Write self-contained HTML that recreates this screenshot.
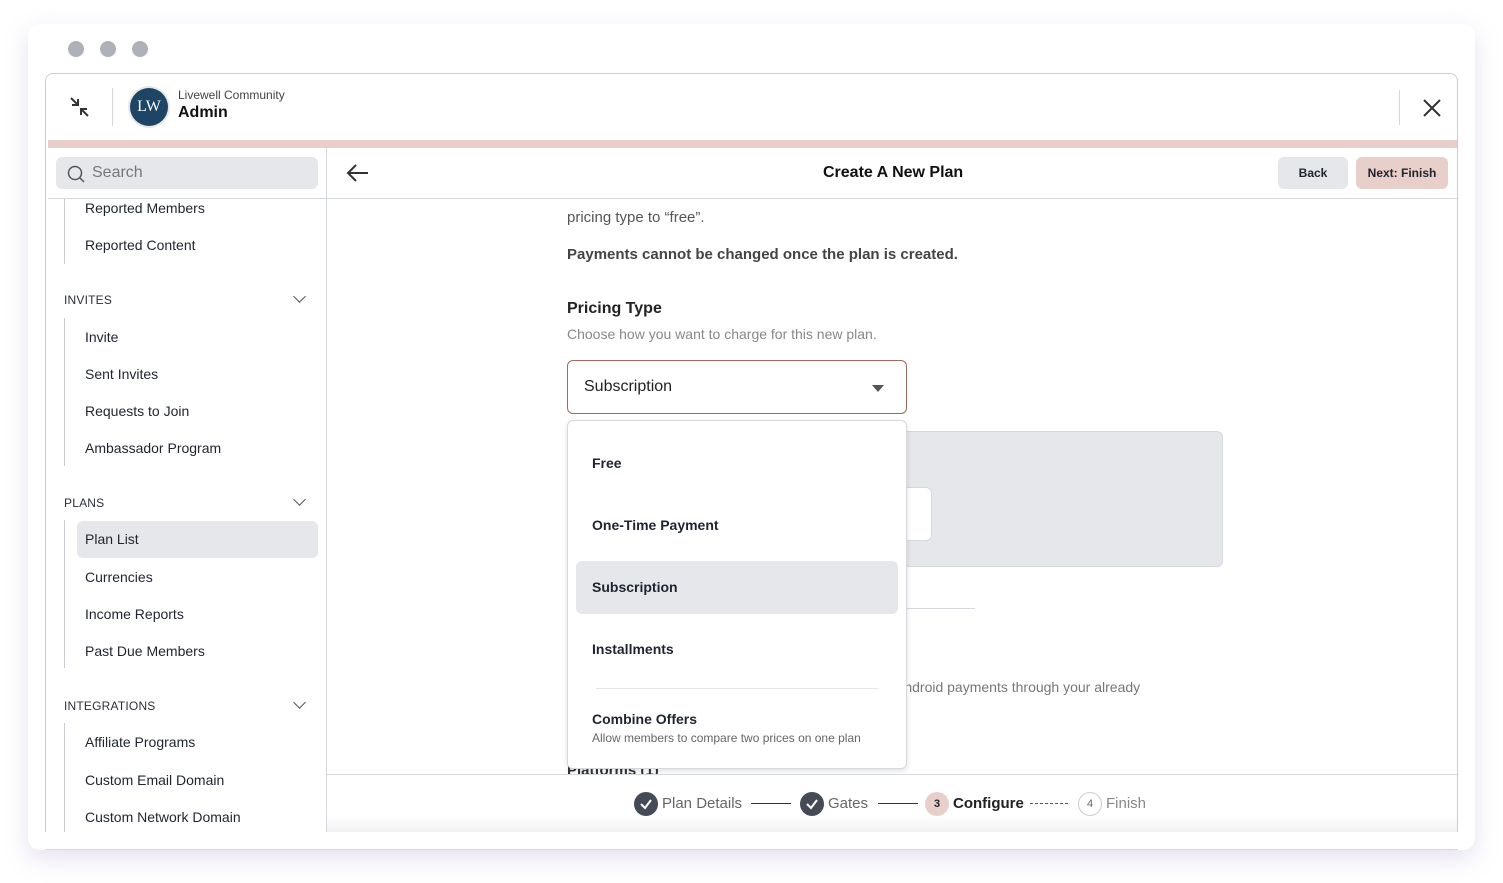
<!DOCTYPE html>
<html><head><style>
*{box-sizing:border-box;margin:0;padding:0}
body{width:1503px;height:883px;background:#fff;font-family:"Liberation Sans",sans-serif;position:relative;overflow:hidden;color:#1f2430}
.abs{position:absolute}
.win{left:28px;top:24px;width:1447px;height:826px;background:#fff;border-radius:12px;box-shadow:0 8px 24px rgba(150,130,200,.25)}
.dot{width:16px;height:16px;border-radius:50%;background:#aeb1b8;top:41px}
.frame{left:45px;top:73px;width:1413px;height:777px;border:1.5px solid #c9cdd3;border-bottom:none;border-radius:8px 8px 0 0;background:#fff;overflow:hidden}
.sb a{position:absolute;left:85px;font-size:14px;color:#1f2430}
.sec{position:absolute;left:64px;font-size:12px;color:#2b2f38;letter-spacing:.2px}
.chev{position:absolute;left:295px;width:9px;height:9px;border-right:1.5px solid #555;border-bottom:1.5px solid #555;transform:rotate(45deg)}
.vl{position:absolute;left:64px;width:1px;background:#c9cdd3}
.opt{position:absolute;left:592px;font-size:14px;font-weight:bold;color:#1f2430}
</style></head><body>
<div class="abs win"></div>
<div class="abs dot" style="left:68px"></div>
<div class="abs dot" style="left:100px"></div>
<div class="abs dot" style="left:132px"></div>
<div class="abs frame"></div>
<!-- header -->
<svg class="abs" style="left:68px;top:96px" width="24" height="22" viewBox="0 0 24 22"><path d="M3 2l7 7M4 9h6V3M20 20l-7-7M19 13h-6v6" stroke="#333" stroke-width="2" fill="none"/></svg>
<div class="abs" style="left:112px;top:88px;width:1px;height:38px;background:#d5d8dd"></div>
<div class="abs" style="left:130px;top:88px;width:38px;height:38px;border-radius:50%;background:#1d4566;color:#fff;font-size:16px;line-height:38px;text-align:center;font-family:'Liberation Serif',serif;box-shadow:0 0 0 2px #e8e8e2">LW</div>
<div class="abs" style="left:178px;top:88px;font-size:12px;color:#444">Livewell Community</div>
<div class="abs" style="left:178px;top:104px;font-size:16px;font-weight:bold;color:#111">Admin</div>
<div class="abs" style="left:1399px;top:90px;width:1px;height:35px;background:#d5d8dd"></div>
<svg class="abs" style="left:1423px;top:99px" width="18" height="18"><path d="M1 1L17 17M17 1L1 17" stroke="#333" stroke-width="2"/></svg>
<div class="abs" style="left:48px;top:140px;width:1409px;height:8px;background:#e8cfc9"></div>
<!-- sidebar -->
<div class="abs" style="left:326px;top:148px;width:1px;height:684px;background:#d5d8dd"></div>
<div class="abs" style="left:48px;top:198px;width:1409px;height:1px;background:#d5d8dd"></div>
<div class="abs" style="left:56px;top:157px;width:262px;height:32px;background:#e6e7eb;border-radius:6px"></div>
<svg class="abs" style="left:67px;top:165px" width="18" height="18"><circle cx="8" cy="8" r="6.5" stroke="#555" stroke-width="1.5" fill="none"/><path d="M13 13l4 4" stroke="#555" stroke-width="1.5"/></svg>
<div class="abs" style="left:92px;top:164px;font-size:16px;color:#777">Search</div>
<div class="sb">
<div class="vl" style="top:199px;height:65px"></div>
<a style="top:200px">Reported Members</a><a style="top:237px">Reported Content</a>
<div class="sec" style="top:293px">INVITES</div><div class="chev" style="top:292px"></div>
<div class="vl" style="top:318px;height:148px"></div>
<a style="top:329px">Invite</a><a style="top:366px">Sent Invites</a><a style="top:403px">Requests to Join</a><a style="top:440px">Ambassador Program</a>
<div class="sec" style="top:496px">PLANS</div><div class="chev" style="top:495px"></div>
<div class="vl" style="top:520px;height:148px"></div>
<div class="abs" style="left:77px;top:521px;width:241px;height:37px;background:#e6e7eb;border-radius:6px"></div>
<a style="top:531px">Plan List</a><a style="top:569px">Currencies</a><a style="top:606px">Income Reports</a><a style="top:643px">Past Due Members</a>
<div class="sec" style="top:699px">INTEGRATIONS</div><div class="chev" style="top:698px"></div>
<div class="vl" style="top:723px;height:110px"></div>
<a style="top:734px">Affiliate Programs</a><a style="top:772px">Custom Email Domain</a><a style="top:809px">Custom Network Domain</a>
</div>
<!-- top bar content -->
<svg class="abs" style="left:346px;top:163px" width="24" height="20"><path d="M22 10H3M10 2L2 10l8 8" stroke="#333" stroke-width="2" fill="none"/></svg>
<div class="abs" style="left:823px;top:164px;font-size:16px;font-weight:bold;color:#111">Create A New Plan</div>
<div class="abs" style="left:1278px;top:157px;width:70px;height:32px;background:#e6e7eb;border-radius:6px;font-size:12px;font-weight:bold;text-align:center;line-height:32px">Back</div>
<div class="abs" style="left:1356px;top:157px;width:92px;height:32px;background:#e8cfc9;border-radius:6px;font-size:12px;font-weight:bold;text-align:center;line-height:32px">Next: Finish</div>
<!-- main content -->
<div class="abs" style="left:567px;top:209px;font-size:15px;color:#555">pricing type to “free”.</div>
<div class="abs" style="left:567px;top:246px;font-size:15px;font-weight:bold;color:#444">Payments cannot be changed once the plan is created.</div>
<div class="abs" style="left:567px;top:300px;font-size:16px;font-weight:bold;color:#222">Pricing Type</div>
<div class="abs" style="left:567px;top:326px;font-size:14px;color:#888">Choose how you want to charge for this new plan.</div>
<div class="abs" style="left:567px;top:360px;width:340px;height:54px;border:1.5px solid #a06a5e;border-radius:6px"></div>
<div class="abs" style="left:584px;top:378px;font-size:16px;color:#222">Subscription</div>
<div class="abs" style="left:872px;top:385px;width:0;height:0;border-left:6px solid transparent;border-right:6px solid transparent;border-top:7px solid #555"></div>
<div class="abs" style="left:900px;top:431px;width:323px;height:136px;background:#e6e7eb;border:1px solid #d5d8dd;border-radius:6px"></div>
<div class="abs" style="left:880px;top:487px;width:52px;height:54px;background:#fff;border:1px solid #d5d8dd;border-radius:6px"></div>
<div class="abs" style="left:906px;top:608px;width:69px;height:1px;background:#d5d8dd"></div>
<div class="abs" style="left:895px;top:679px;font-size:14px;color:#777">Android payments through your already</div>
<div class="abs" style="left:567px;top:762px;font-size:15px;font-weight:bold;color:#333">Platforms (1)</div>
<!-- dropdown -->
<div class="abs" style="left:567px;top:420px;width:340px;height:349px;background:#fff;border:1px solid #d5d8dd;border-radius:6px;box-shadow:0 2px 6px rgba(0,0,0,.12)"></div>
<div class="opt" style="top:455px">Free</div>
<div class="opt" style="top:517px">One-Time Payment</div>
<div class="abs" style="left:576px;top:561px;width:322px;height:53px;background:#e6e7eb;border-radius:6px"></div>
<div class="opt" style="top:579px">Subscription</div>
<div class="opt" style="top:641px">Installments</div>
<div class="abs" style="left:596px;top:688px;width:282px;height:1px;background:#e6e7eb"></div>
<div class="opt" style="top:711px">Combine Offers</div>
<div class="abs" style="left:592px;top:731px;font-size:12px;color:#666">Allow members to compare two prices on one plan</div>
<!-- footer -->
<div class="abs" style="left:327px;top:774px;width:1130px;height:58px;background:linear-gradient(#fff,#fff 70%,#f2f2f4);border-top:1px solid #d5d8dd"></div>
<div class="abs" style="left:634px;top:792px;width:24px;height:24px;border-radius:50%;background:#454a57"></div>
<svg class="abs" style="left:634px;top:792px" width="24" height="24"><path d="M7 12l4 4 6-8" stroke="#fff" stroke-width="2" fill="none"/></svg>
<div class="abs" style="left:662px;top:795px;font-size:15px;color:#666">Plan Details</div>
<div class="abs" style="left:751px;top:803px;width:40px;height:1px;background:#333"></div>
<div class="abs" style="left:800px;top:792px;width:24px;height:24px;border-radius:50%;background:#454a57"></div>
<svg class="abs" style="left:800px;top:792px" width="24" height="24"><path d="M7 12l4 4 6-8" stroke="#fff" stroke-width="2" fill="none"/></svg>
<div class="abs" style="left:828px;top:795px;font-size:15px;color:#666">Gates</div>
<div class="abs" style="left:878px;top:803px;width:40px;height:1px;background:#333"></div>
<div class="abs" style="left:925px;top:792px;width:24px;height:24px;border-radius:50%;background:#e8cfc9;font-size:11px;font-weight:bold;text-align:center;line-height:24px">3</div>
<div class="abs" style="left:953px;top:795px;font-size:15px;font-weight:bold;color:#222">Configure</div>
<div class="abs" style="left:1030px;top:803px;width:38px;border-top:1px dashed #555"></div>
<div class="abs" style="left:1078px;top:792px;width:24px;height:24px;border-radius:50%;border:1px solid #ccc;font-size:11px;text-align:center;line-height:22px;color:#666">4</div>
<div class="abs" style="left:1106px;top:795px;font-size:15px;color:#888">Finish</div>
<div class="abs" style="left:45px;top:832px;width:1413px;height:18px;background:#fff;border-bottom:1px solid #d5d8dd"></div>
</body></html>
